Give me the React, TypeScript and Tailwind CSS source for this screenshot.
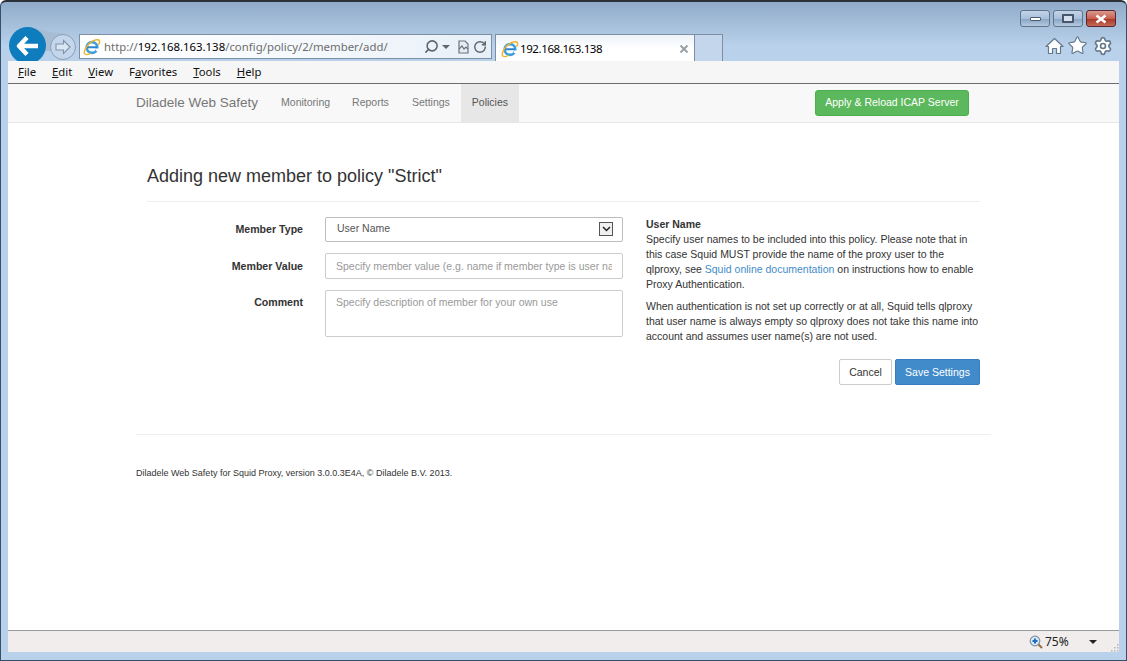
import React from 'react';
import { RotateCw, Search, Settings, Star } from 'lucide-react';

const IeLogo = () => (
    <svg width="18" height="18" viewBox="0 0 18 18" className="shrink-0">
        <circle cx="9" cy="9.500" r="5.300" fill="none" stroke="#3d9fe0" strokeWidth="2.700" />
        <path d="M4 9.300h10" stroke="#2b86cf" strokeWidth="1.900" />
        <path d="M12.800 11.800h4.200" stroke="#ffffff" strokeWidth="2.400" />
        <path d="M1.800 16.200C-.2 12.600 4.800 5.400 10.500 2.600c3.300-1.500 6.300-1.300 6.200 1.200-.1.900-.6 1.900-1.300 2.900" fill="none" stroke="#f0b429" strokeWidth="1.500" />
        <path d="M1.800 16.200c2 1 4.400-.1 5.800-1" fill="none" stroke="#f0b429" strokeWidth="1.200" />
    </svg>
);

const WindowButton: React.FC<{ close?: boolean; children: React.ReactNode }> = ({ close, children }) => (
    <div
        className={`flex h-[17px] w-[30px] items-center justify-center rounded-[3px] border ${
            close
                ? 'border-[#5a2430] bg-[linear-gradient(#d89a8e,#c9604f_50%,#a93a2a_55%,#c46a58)]'
                : 'border-[#5f7389] bg-[linear-gradient(#c3d4e8,#a9c0da_50%,#8ba6c4_55%,#b4c9e0)]'
        }`}
    >
        {children}
    </div>
);

const Underlined: React.FC<{ label: string; at: number }> = ({ label, at }) => (
    <span className="text-[11.300px] text-[#111]">
        {label.slice(0, at)}
        <span className="underline">{label[at]}</span>
        {label.slice(at + 1)}
    </span>
);

const FormRow: React.FC<{ label: string; className?: string; children: React.ReactNode }> = ({ label, className, children }) => (
    <div className="flex">
        <label className={`w-[156px] text-right text-[10.6px] font-bold leading-[15px] text-[#333] ${className || ''}`}>{label}</label>
        <div className="ml-[22px] w-[298px]">{children}</div>
    </div>
);

export default function App() {
    return (
        <div
            className="flex h-[661px] w-[1127px] flex-col overflow-hidden rounded-t-[6px] border border-t-2 border-[#33506c] border-t-[#2c3138] bg-[linear-gradient(#90abc9,#b9d1ea_44px)] font-['Liberation_Sans',sans-serif]"
        >
            {/* browser chrome */}
            <div className="relative h-[59px] shrink-0 overflow-hidden">
                <svg width="70" height="40" viewBox="0 0 70 40" className="absolute left-[10px] top-[23px]">
                    <path d="M18 2C28 2 34 8 52 8L40 26H18z" fill="#a8bdd4" />
                </svg>
                <div className="relative flex h-[25px] justify-end gap-[3px] pr-[10px] pt-[8px]">
                    <WindowButton><div className="h-[4px] w-[11px] rounded-[1px] border border-[#4b5b6d] bg-white" /></WindowButton>
                    <WindowButton><div className="h-[9px] w-[12px] rounded-[1px] border-2 border-[#47566a] bg-[#d5e1ee]" /></WindowButton>
                    <WindowButton close>
                        <svg width="14" height="10" viewBox="0 0 14 10"><path d="M2.500 1.500l9 7M11.500 1.500l-9 7" stroke="#fff" strokeWidth="2.600" /></svg>
                    </WindowButton>
                </div>
                <div className="relative flex items-start pl-[8px]">
                    <div className="flex h-[37px] w-[37px] shrink-0 items-center justify-center rounded-full bg-[#0f7dbd]">
                        <svg width="24" height="22" viewBox="0 0 24 22"><path d="M11 2.500L3 11l8 8.500M4 11h18" fill="none" stroke="#fff" strokeWidth="4.400" strokeLinejoin="round" /></svg>
                    </div>
                    <div className="ml-[4px] mt-[7px] flex h-[26px] w-[26px] shrink-0 items-center justify-center rounded-full border border-[#8c9fb4] bg-[#c3d6ec]">
                        <svg width="18" height="16" viewBox="0 0 18 16"><path d="M9.500 1.500L16 8l-6.500 6.500V11H2V5h7.500z" fill="#d9e6f3" stroke="#8193a8" strokeWidth="1.100" /></svg>
                    </div>
                    <div className="ml-[3px] mt-[7px] flex h-[25px] w-[413px] shrink-0 items-center border border-[#7d8fa3] bg-[linear-gradient(90deg,#ffffff,#f4f8fc_60%,#e7eff8)] pl-[3px] pr-[4px]">
                        <IeLogo />
                        <span className="ml-[3px] font-['Noto_Sans',sans-serif] text-[11.400px] text-[#6d6d6d]">
                            http://<span className="text-black">192.168.163.138</span>/config/policy/2/member/add/
                        </span>
                        <div className="ml-auto flex items-center text-[#5c6670]">
                            <Search size={15} strokeWidth={2.500} className="-scale-x-100" />
                            <div className="ml-[3px] h-0 w-0 border-x-[4px] border-t-[4px] border-x-transparent border-t-[#5c6670]" />
                            <svg width="13" height="14" viewBox="0 0 13 14" className="ml-[7px]">
                                <path d="M2 1h6l3 3v9H2z" fill="#e6ecf2" stroke="#6a7480" strokeWidth="1.200" />
                                <path d="M2 9l3-3 2 3 2-2 2 2" fill="none" stroke="#6a7480" strokeWidth="1.200" />
                            </svg>
                            <RotateCw size={14} strokeWidth={2.500} className="ml-[3px]" />
                        </div>
                    </div>
                    <div className="ml-[3px] mt-[7px] flex h-[28px] w-[200px] shrink-0 items-center border border-b-0 border-[#7d8fa3] bg-[linear-gradient(#ecf2f9,#ffffff_50%)] pl-[5px] pr-[5px]">
                        <IeLogo />
                        <span className="ml-[1px] font-['Noto_Sans',sans-serif] text-[11.500px] tracking-[-0.4px] text-black">192.168.163.138</span>
                        <svg width="10" height="10" viewBox="0 0 10 10" className="ml-auto"><path d="M1.500 1.500l7 7M8.500 1.500l-7 7" stroke="#9aa0a6" strokeWidth="2" /></svg>
                    </div>
                    <div className="mt-[7px] h-[28px] w-[28px] shrink-0 border border-b-0 border-l-0 border-[#7d8fa3] bg-[#c3d6ec]" />
                    <div className="ml-auto mr-[13px] mt-[8px] flex items-center gap-[3px]">
                        <svg width="19" height="18" viewBox="0 0 19 18">
                            <path d="M9.500 1.500L18 9.500h-2.500v7h-4v-5h-4v5h-4v-7H1z" fill="#fff" stroke="#65788c" strokeWidth="1.200" strokeLinejoin="round" />
                        </svg>
                        <Star size={21} fill="#ffffff" stroke="#65788c" strokeWidth={1.300} />
                        <Settings size={20} fill="#ffffff" stroke="#65788c" strokeWidth={2} className="ml-[2px]" />
                    </div>
                </div>
            </div>

            {/* viewport */}
            <div className="mx-[7px] flex min-h-0 flex-1 flex-col bg-white">
                <div className="flex h-[23px] shrink-0 items-center gap-[16px] border-b border-[#696d72] bg-[#f6f6f6] pl-[10px] font-['Noto_Sans',sans-serif]">
                    <Underlined label="File" at={0} />
                    <Underlined label="Edit" at={0} />
                    <Underlined label="View" at={0} />
                    <Underlined label="Favorites" at={1} />
                    <Underlined label="Tools" at={0} />
                    <Underlined label="Help" at={0} />
                </div>

                <nav className="flex h-[39px] shrink-0 items-stretch border-b border-[#e7e7e7] bg-[#f8f8f8] pl-[128px] text-[10.500px] text-[#777]">
                    <span className="flex items-center text-[13.500px]">Diladele Web Safety</span>
                    <a className="ml-[23px] flex items-center">Monitoring</a>
                    <a className="ml-[22px] flex items-center">Reports</a>
                    <a className="ml-[23px] flex items-center">Settings</a>
                    <a className="ml-[11px] flex items-center bg-[#e7e7e7] px-[11px] text-[#555]">Policies</a>
                    <div className="ml-[296px] flex items-center">
                        <button className="h-[26px] w-[154px] rounded-[3px] border border-[#4cae4c] bg-[#5cb85c] text-[10.500px] text-white">
                            Apply &amp; Reload ICAP Server
                        </button>
                    </div>
                </nav>

                <main className="flex-1 px-[128px] text-[#333]">
                    <div className="px-[11px]">
                        <div className="mt-[41px] h-[38px] border-b border-[#eeeeee]">
                            <h1 className="text-[18px] leading-[24px] text-[#333]">Adding new member to policy &quot;Strict&quot;</h1>
                        </div>
                        <div className="mt-[15px] flex">
                            <div className="flex flex-col">
                                <FormRow label="Member Type" className="pt-[5px]">
                                    <div className="relative flex h-[25px] items-center rounded-[2px] border border-[#bdbdbd] pl-[11px] text-[10.500px] text-[#555]">
                                        <span className="-translate-y-px">User Name</span>
                                        <div className="absolute right-[9px] top-[4px] flex h-[14px] w-[14px] items-center justify-center border border-[#555] bg-[#f0f0f0]">
                                            <svg width="9" height="6" viewBox="0 0 9 6"><path d="M1 1l3.500 3.500L8 1" fill="none" stroke="#222" strokeWidth="1.500" /></svg>
                                        </div>
                                    </div>
                                </FormRow>
                                <div className="mt-[11px]">
                                    <FormRow label="Member Value" className="pt-[6px]">
                                        <input
                                            readOnly
                                            placeholder="Specify member value (e.g. name if member type is user name)"
                                            className="block h-[26px] w-full rounded-[2px] border border-[#cccccc] px-[10px] text-[10.500px] outline-none placeholder:text-[#999]"
                                        />
                                    </FormRow>
                                </div>
                                <div className="mt-[11px]">
                                    <FormRow label="Comment" className="pt-[5px]">
                                        <textarea
                                            readOnly
                                            placeholder="Specify description of member for your own use"
                                            className="block h-[47px] w-full resize-none rounded-[2px] border border-[#cccccc] px-[10px] py-[4px] text-[10.500px] leading-[15px] outline-none placeholder:text-[#999]"
                                        />
                                    </FormRow>
                                </div>
                            </div>
                            <div className="ml-[23px] w-[334px] text-[10.500px] leading-[15px] text-[#333]">
                                <div className="font-bold">User Name</div>
                                <p>
                                    Specify user names to be included into this policy. Please note that in this case Squid MUST provide the name of the proxy user to the qlproxy, see{' '}
                                    <a className="text-[#428bca]">Squid online documentation</a> on instructions how to enable Proxy Authentication.
                                </p>
                                <p className="mt-[7px]">
                                    When authentication is not set up correctly or at all, Squid tells qlproxy that user name is always empty so qlproxy does not take this name into account and assumes user name(s) are not used.
                                </p>
                                <div className="mt-[15px] flex justify-end gap-[3px]">
                                    <button className="h-[26px] w-[53px] rounded-[2px] border border-[#cccccc] bg-white text-[#333]">Cancel</button>
                                    <button className="h-[26px] w-[85px] rounded-[2px] border border-[#357ebd] bg-[#428bca] text-white">Save Settings</button>
                                </div>
                            </div>
                        </div>
                    </div>
                    <footer className="mt-[49px] border-t border-[#eeeeee] pt-[32px] text-[9px] leading-[12px] text-[#333]">
                        Diladele Web Safety for Squid Proxy, version 3.0.0.3E4A, © Diladele B.V. 2013.
                    </footer>
                </main>

                {/* status bar */}
                <div className="flex h-[22px] shrink-0 items-center border-t border-[#9b9b9b] bg-[#f0edec] font-['Noto_Sans',sans-serif] text-[12px] text-[#222]">
                    <svg width="14" height="14" viewBox="0 0 14 14" className="ml-[1021px]">
                        <circle cx="6" cy="6" r="4.800" fill="#dbe8f6" stroke="#7d93a8" strokeWidth="1.200" />
                        <path d="M3.500 6h5M6 3.500v5" stroke="#1f6fc0" strokeWidth="2" />
                        <path d="M9.500 9.500l3.500 3.500" stroke="#9a6a3a" strokeWidth="2" />
                    </svg>
                    <span className="ml-[2px]">75%</span>
                    <div className="ml-[20px] h-0 w-0 border-x-[4px] border-t-[4px] border-x-transparent border-t-[#222]" />
                    <svg width="8" height="8" viewBox="0 0 8 8" className="ml-auto mt-[12px]">
                        <path d="M6 0h1.500v1.500H6zM3 3h1.500v1.500H3zM6 3h1.500v1.500H6zM0 6h1.500v1.500H0zM3 6h1.500v1.500H3zM6 6h1.500v1.500H6z" fill="#b5b5b5" />
                    </svg>
                </div>
            </div>
            <div className="h-[8px] shrink-0 bg-[#b9d1ea]" />
        </div>
    );
}
